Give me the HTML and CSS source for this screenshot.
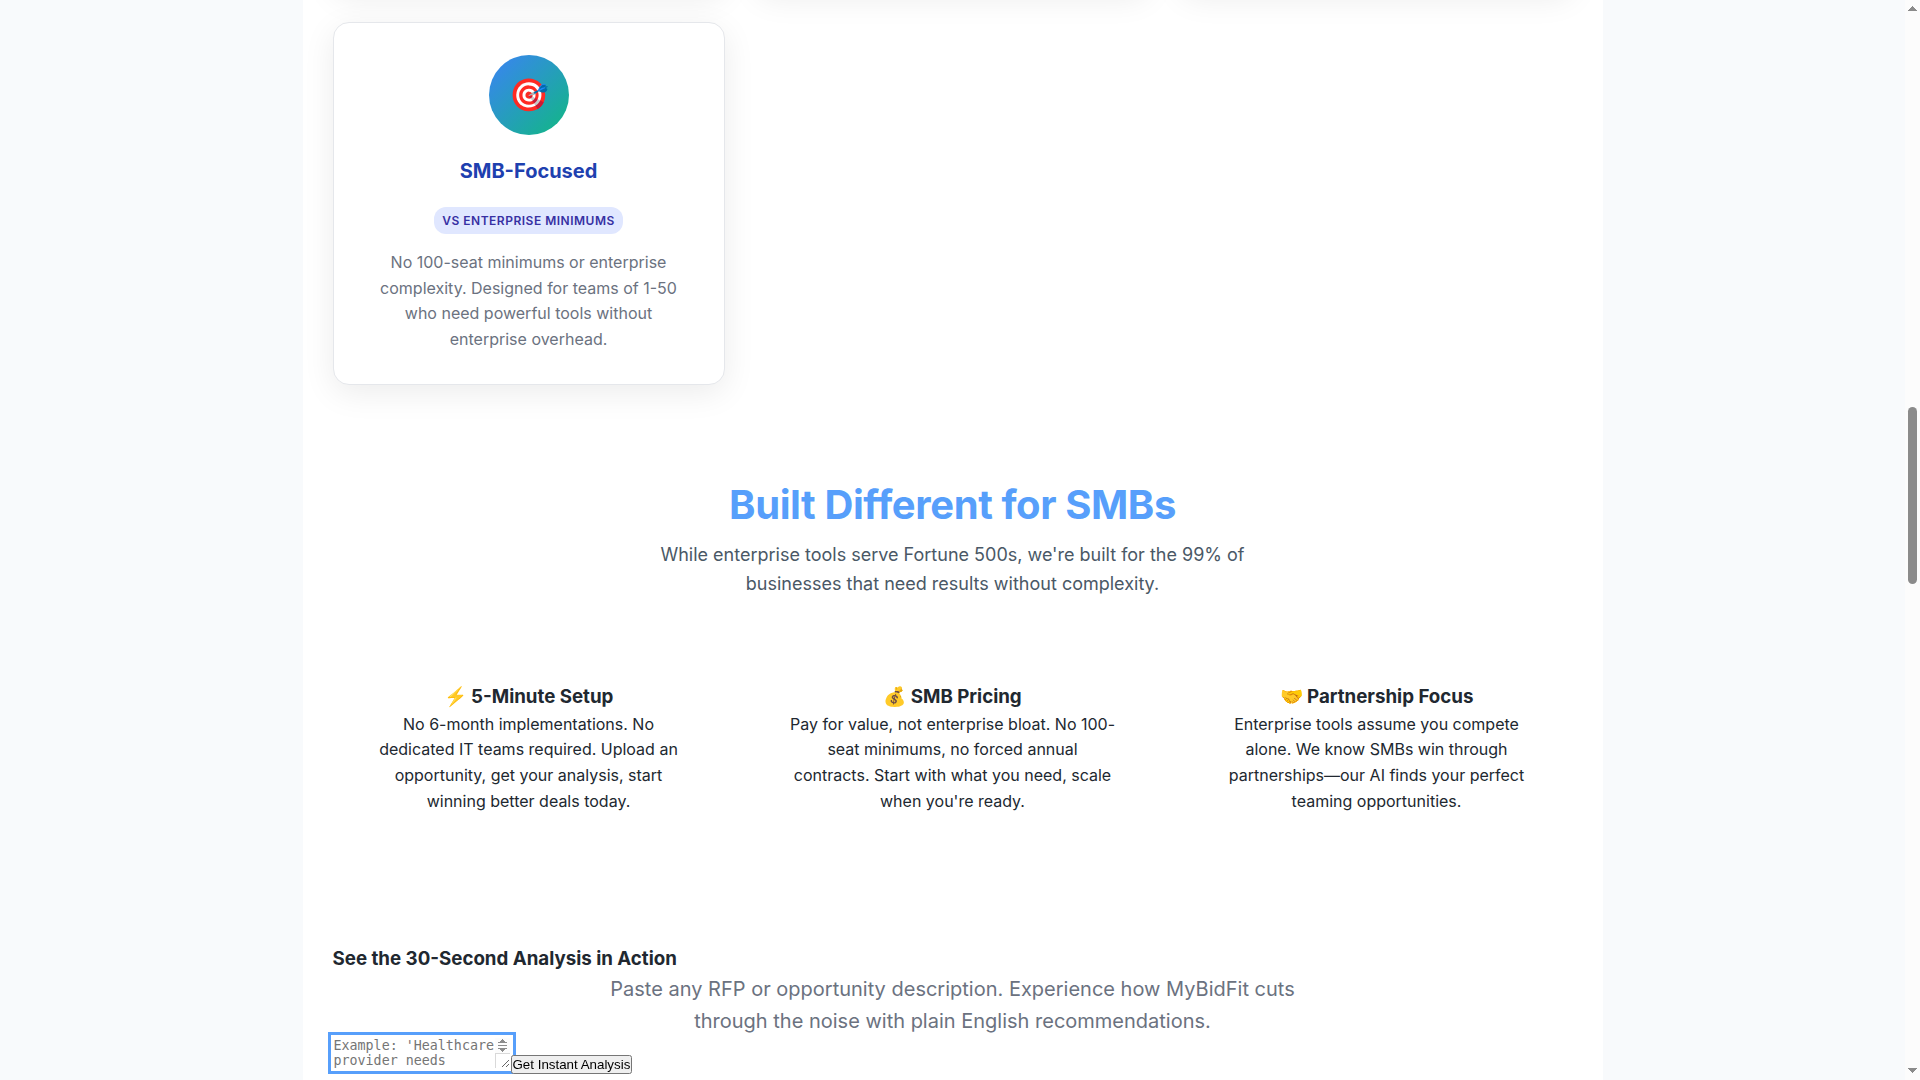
FILE: index.html
```html
<!DOCTYPE html>
<html lang="en">
<head>
<meta charset="utf-8">
<title>MyBidFit</title>
<link rel="stylesheet" href="styles.css">
</head>
<body>
<div class="viewport">
  <main class="container">
    <section class="cards cards-above">
      <div class="card"></div><div class="card"></div><div class="card"></div>
    </section>
    <section class="cards">
      <article class="card">
        <div class="card-icon">🎯</div>
        <h3 class="card-title">SMB-Focused</h3>
        <span class="badge">vs Enterprise Minimums</span>
        <p class="card-text">No 100-seat minimums or enterprise complexity. Designed for teams of 1-50 who need powerful tools without enterprise overhead.</p>
      </article>
    </section>
    <section class="different">
      <h2 class="section-title">Built Different for SMBs</h2>
      <p class="section-text">While enterprise tools serve Fortune 500s, we're built for the 99% of businesses that need results without complexity.</p>
      <div class="features">
        <div class="feature">
          <h4 class="heading">⚡ 5-Minute Setup</h4>
          <p>No 6-month implementations. No dedicated IT teams required. Upload an opportunity, get your analysis, start winning better deals today.</p>
        </div>
        <div class="feature">
          <h4 class="heading">💰 SMB Pricing</h4>
          <p>Pay for value, not enterprise bloat. No 100-seat minimums, no forced annual contracts. Start with what you need, scale when you're ready.</p>
        </div>
        <div class="feature">
          <h4 class="heading">🤝 Partnership Focus</h4>
          <p>Enterprise tools assume you compete alone. We know SMBs win through partnerships—our AI finds your perfect teaming opportunities.</p>
        </div>
      </div>
    </section>
    <section class="demo">
      <h3 class="heading">See the 30-Second Analysis in Action</h3>
      <p class="demo-text">Paste any RFP or opportunity description. Experience how MyBidFit cuts through the noise with plain English recommendations.</p>
      <div class="demo-form">
        <div class="input-wrap">
          <textarea class="demo-input" placeholder="Example: 'Healthcare provider needs cybersecurity assessment for 200+ employees...'"></textarea>
          <svg class="input-scroll" width="15" height="15" viewBox="0 0 15 15"><path d="M0 0h15v15H0z" fill="#fcfcfc"/><path d="M7 1h1v1h1v1h1v1h2v1H3V4h2V3h1V2h1zM3 7h9v1H3zM7 14h1v-1h1v-1h1v-1h2v-1H3v1h2v1h1v1h1z" fill="#8b8b8b"/></svg>
          <span class="input-corner"></span>
        </div>
        <button class="demo-button">Get Instant Analysis</button>
      </div>
    </section>
  </main>
  <div class="scrollbar">
    <svg width="9" height="5" viewBox="0 0 9 5"><path d="M4 0h1v1h1v1h1v1h1v1h1v1H0V4h1V3h1V2h1V1h1z"/></svg>
    <div class="thumb"></div>
    <svg width="9" height="5" viewBox="0 0 9 5"><path d="M4 5h1V4h1V3h1V2h1V1h1V0H0v1h1v1h1v1h1v1h1z"/></svg>
  </div>
</div>
</body>
</html>
```
FILE: styles.css
```css
* { margin: 0; padding: 0; box-sizing: border-box; }
body { font-family: Inter, "Noto Sans", sans-serif; font-size: 16px; line-height: 1.6; color: #212830; background: #f8fafc; overflow: hidden; }
.viewport { display: grid; grid-template-columns: 1fr 15px; height: 1080px; overflow: hidden; }
.container { width: 1300px; height: 1080px; margin: 0 auto; padding: 0 30px; background: #fff; overflow: hidden; }
.cards { display: grid; grid-template-columns: repeat(3, 1fr); gap: 32px; }
.cards-above { height: 22px; align-items: start; }
.cards-above .card { height: 200px; margin-top: -210px; }
.card { padding: 32px 32px 31px; border: 1px solid #e5e7eb; border-radius: 16px; background: #fff; box-shadow: 0 8px 32px rgba(0, 0, 0, .08); text-align: center; }
.card-icon { display: flex; align-items: center; justify-content: center; width: 80px; height: 80px; margin: 0 auto 20px; border-radius: 50%; background: linear-gradient(135deg, #3b82f6, #10b981); font-size: 32px; }
.card-title { margin-bottom: 20px; font-size: 20px; font-weight: 700; line-height: 32px; color: #1e40af; }
.badge { display: inline-block; margin-bottom: 16px; padding: 4px 8px; border-radius: 12px; background: #e0e7ff; color: #3730a3; font-size: 12px; font-weight: 600; letter-spacing: .5px; text-transform: uppercase; }
.card-text { color: #6b7280; }
.section-title { margin-top: 96px; font-size: 40px; font-weight: 700; line-height: 48px; letter-spacing: -.4px; text-align: center; color: #579ffb; }
.section-text { max-width: 600px; margin: 12.6px auto 0; font-size: 18px; text-align: center; color: #4a5866; }
.features { display: grid; grid-template-columns: repeat(3, 1fr); gap: 32px; margin-top: 63.2px; }
.feature { padding: 20px 32px; text-align: center; }
.heading { font-size: 18.72px; font-weight: 700; line-height: 1.6; }
.demo { margin-top: 109.3px; }
.demo-text { max-width: 700px; margin: 0 auto; font-size: 20px; text-align: center; color: #6b7280; }
.demo-form { display: flex; align-items: flex-end; }
.input-wrap { position: relative; display: flex; width: 178px; height: 32px; }
.demo-input { width: 178px; height: 32px; border: 1px solid transparent; outline: 3px solid #579ffb; outline-offset: 2px; font-size: 13.333px; font-family: "DejaVu Sans Mono", monospace; line-height: normal; background: #fff; }
.input-scroll { position: absolute; top: 1px; right: 1px; }
.input-corner { position: absolute; right: 1px; bottom: 1px; width: 15px; height: 15px; border: solid #d9d9d9; border-width: 1px 0 0 1px; pointer-events: none; }
.demo-button { position: relative; height: 19px; margin-bottom: -5px; font: 13.333px "Liberation Sans", sans-serif; line-height: normal; }
.scrollbar { display: flex; flex-direction: column; align-items: center; background: #fcfcfc; padding: 6px 0 7px; }
.scrollbar svg { fill: #8b8b8b; }
.thumb { width: 9px; height: 177px; margin: 396px 0 auto; border-radius: 5px; background: #8b8b8b; }
```
